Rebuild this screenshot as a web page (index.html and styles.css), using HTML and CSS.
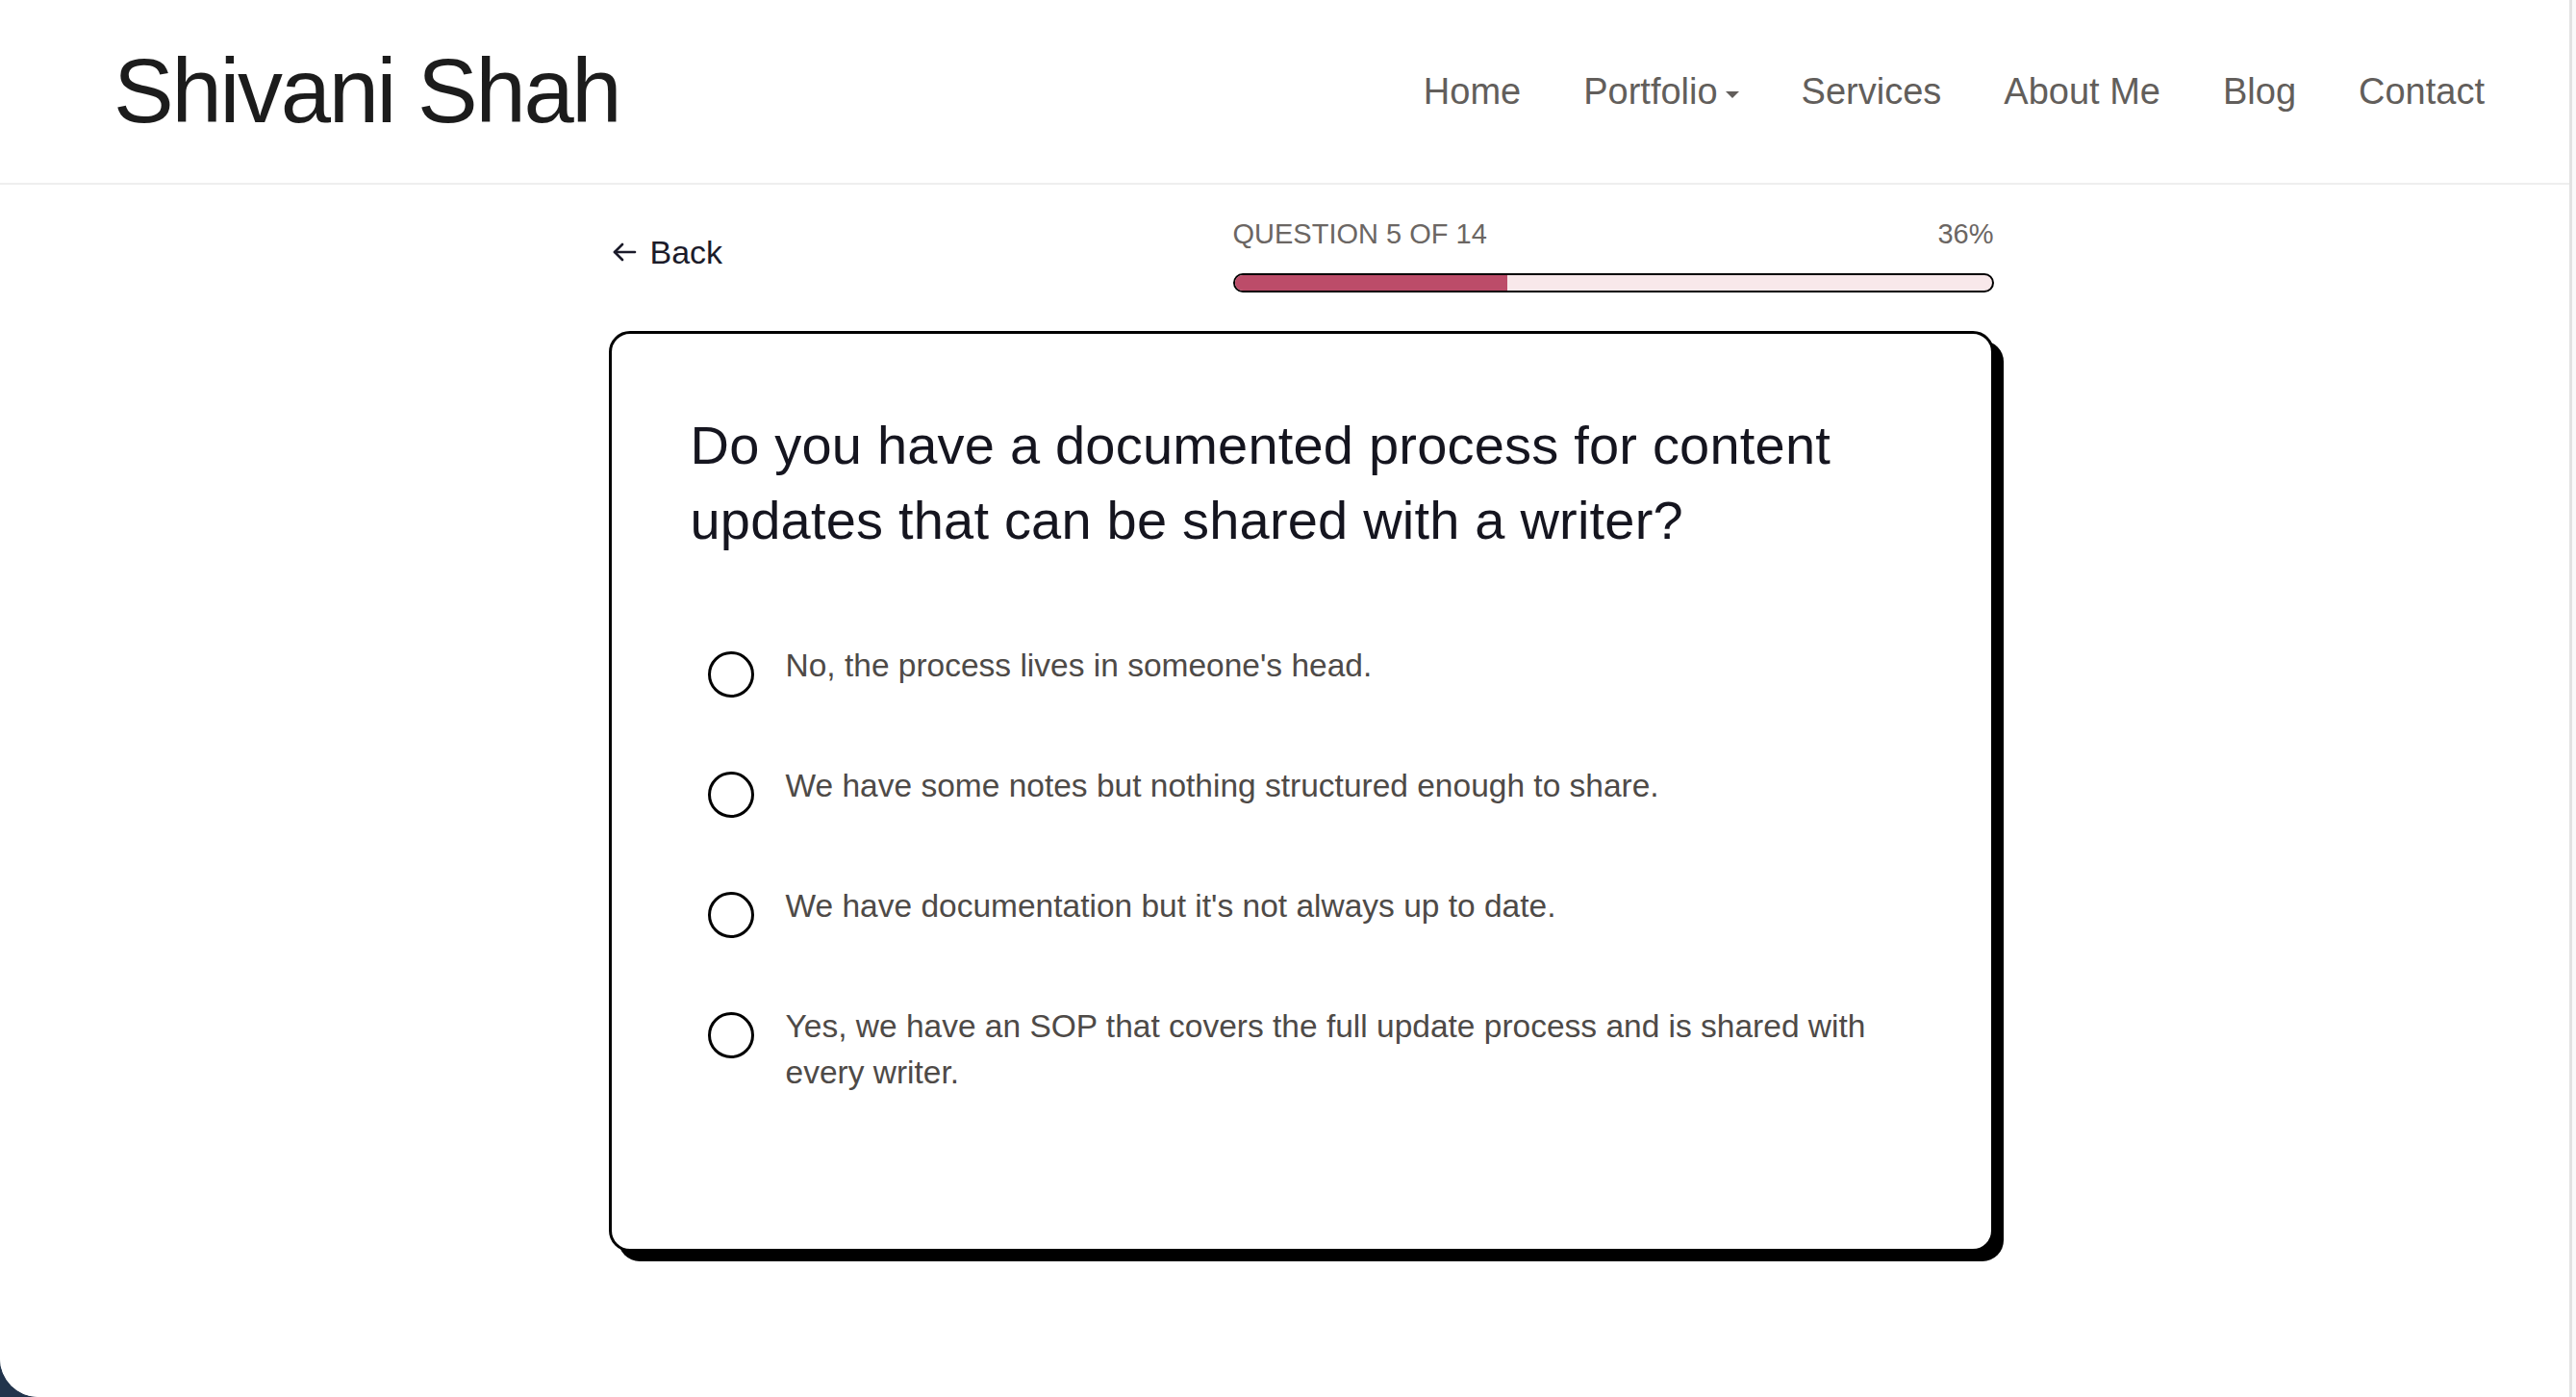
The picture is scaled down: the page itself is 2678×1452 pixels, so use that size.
FILE: index.html
```html
<!DOCTYPE html>
<html lang="en">
<head>
  <meta charset="UTF-8" />
  <meta name="viewport" content="width=device-width, initial-scale=1.0" />
  <title>Content Update Assessment - Shivani Shah</title>
  <link rel="stylesheet" href="styles.css">
</head>
<body>
  <div class="window">
    <div class="viewport">
      <header class="site-header">
        <a class="brand" href="#">Shivani Shah</a>
        <nav class="nav">
          <a href="#">Home</a>
          <a href="#" class="has-menu">Portfolio <span class="caret"></span></a>
          <a href="#">Services</a>
          <a href="#">About Me</a>
          <a href="#">Blog</a>
          <a href="#">Contact</a>
        </nav>
      </header>

      <main class="quiz">
        <div class="quiz-wrap">
          <div class="quiz-top">
            <a class="back" href="#">
              <svg width="26" height="22" viewBox="0 0 26 22" fill="none" stroke="currentColor" stroke-width="2.6" stroke-linecap="round" stroke-linejoin="round">
                <path d="M24 11H3"/>
                <path d="M11 3L3 11l8 8"/>
              </svg>
              Back
            </a>
            <div class="progress">
              <div class="progress-label">
                <span>QUESTION 5 OF 14</span>
                <span>36%</span>
              </div>
              <div class="progress-bar">
                <div class="progress-fill" style="width: 36%"></div>
              </div>
            </div>
          </div>

          <section class="card">
            <h2 class="question">Do you have a documented process for content updates that can be shared with a writer?</h2>
            <ul class="options">
              <li class="option">
                <span class="radio"></span>
                <span class="option-text">No, the process lives in someone's head.</span>
              </li>
              <li class="option">
                <span class="radio"></span>
                <span class="option-text">We have some notes but nothing structured enough to share.</span>
              </li>
              <li class="option">
                <span class="radio"></span>
                <span class="option-text">We have documentation but it's not always up to date.</span>
              </li>
              <li class="option">
                <span class="radio"></span>
                <span class="option-text">Yes, we have an SOP that covers the full update process and is shared with every writer.</span>
              </li>
            </ul>
          </section>
        </div>
      </main>
    </div>
    <div class="scroll-track"></div>
  </div>
</body>
</html>
```

FILE: styles.css
```css
html, body {
  margin: 0;
  padding: 0;
}
body {
  font-family: "Liberation Sans", Arial, sans-serif;
  background: #22344c;
  color: #1c1c1c;
}
a {
  text-decoration: none;
  color: inherit;
}
.window {
  display: flex;
  height: 1452px;
  background: #fff;
  border-bottom-left-radius: 40px;
  overflow: hidden;
}
.viewport {
  flex: 1;
  background: #fff;
}
.scroll-track {
  width: 4px;
  background: #fafafa;
  border-left: 3px solid #e2e2e2;
}

/* header */
.site-header {
  display: flex;
  align-items: center;
  justify-content: space-between;
  height: 190px;
  padding: 0 88px 0 118px;
  border-bottom: 2px solid #eeeeee;
}
.brand {
  font-size: 94px;
  letter-spacing: -2.3px;
  color: #1c1c1c;
}
.nav {
  display: flex;
  align-items: center;
  gap: 65px;
}
.nav a {
  font-size: 38px;
  color: #625e5b;
  display: flex;
  align-items: center;
}
.caret {
  display: inline-block;
  margin-left: 8px;
  margin-top: 6px;
  border-left: 7px solid transparent;
  border-right: 7px solid transparent;
  border-top: 7px solid #625e5b;
}

/* quiz */
.quiz {
  display: flex;
  justify-content: center;
  padding: 34px 0 0 34px;
}
.quiz-wrap {
  width: 1440px;
}
.quiz-top {
  display: flex;
  align-items: center;
  justify-content: space-between;
}
.back {
  display: flex;
  align-items: center;
  gap: 14px;
  font-size: 34px;
  line-height: 40px;
  color: #1b1b2a;
  margin-left: 3px;
  margin-top: -6px;
}
.progress {
  width: 791px;
}
.progress-label {
  display: flex;
  justify-content: space-between;
  font-size: 29px;
  line-height: 34px;
  color: #6b6663;
}
.progress-bar {
  margin-top: 24px;
  height: 20px;
  box-sizing: border-box;
  border: 2px solid #000;
  border-radius: 10px;
  background: #f8e8ea;
  overflow: hidden;
}
.progress-fill {
  height: 100%;
  background: #bc4c69;
}

.card {
  margin-top: 40px;
  box-sizing: border-box;
  border: 3px solid #000;
  border-radius: 22px;
  box-shadow: 10px 10px 0 #000;
  padding: 77px 80px 159px 82px;
  background: #fff;
}
.question {
  margin: 0;
  font-size: 56px;
  line-height: 78px;
  font-weight: 400;
  letter-spacing: 0.2px;
  color: #15151f;
}
.options {
  list-style: none;
  margin: 88px 0 0;
  padding: 0 0 0 18px;
  display: flex;
  flex-direction: column;
  gap: 68px;
}
.option {
  display: flex;
  align-items: flex-start;
  gap: 33px;
}
.radio {
  flex: none;
  width: 48px;
  height: 48px;
  box-sizing: border-box;
  border: 3px solid #000;
  border-radius: 50%;
  margin-top: 9px;
}
.option-text {
  font-size: 33.5px;
  line-height: 48px;
  color: #4e4a47;
}
```
